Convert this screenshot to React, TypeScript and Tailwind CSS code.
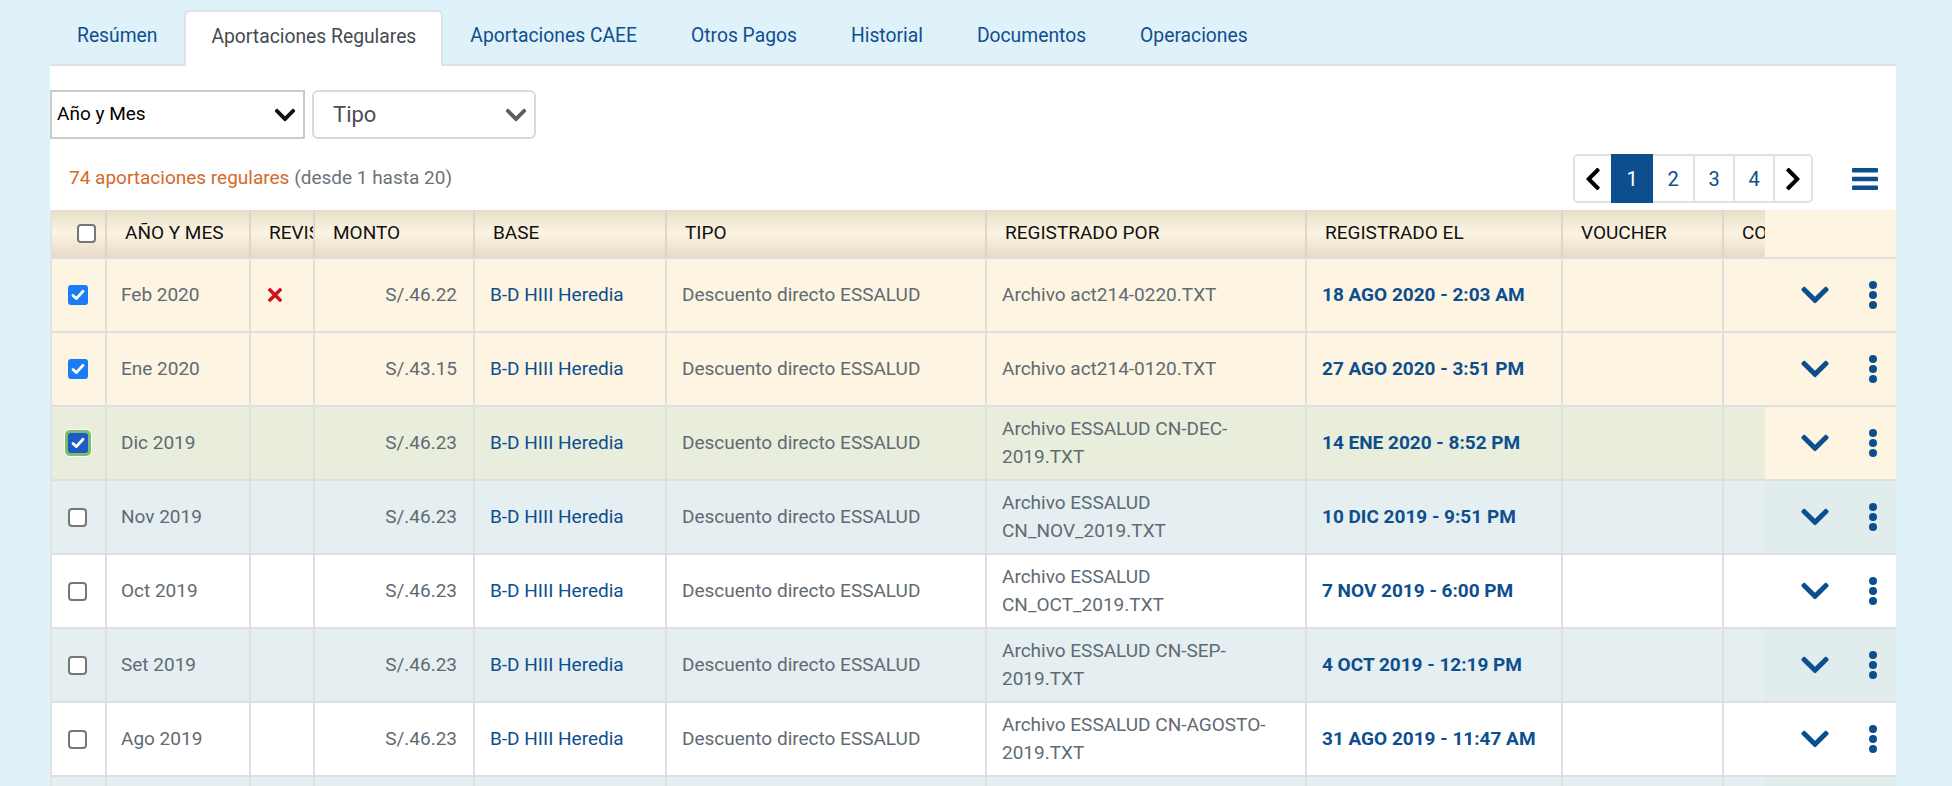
import { FaChevronDown, FaChevronLeft, FaChevronRight } from 'react-icons/fa';

type Tone = 'cream' | 'green' | 'stripe' | 'white';
type CheckState = 'off' | 'on' | 'focus';

interface Aporte {
  mes: string;
  revis?: boolean;
  monto: string;
  archivo: string;
  fecha: string;
  check: CheckState;
  tone: Tone;
}

const COLS =
  'grid grid-cols-[53px_144px_64px_160px_192px_320px_320px_256px_161px_43px_131px]';

const ROW_BG: Record<Tone, string> = {
  cream: 'bg-[#fdf4e1]',
  green: 'bg-[#e8eedb]',
  stripe: 'bg-[#e5eef0]',
  white: 'bg-white',
};

const STICKY_BG: Record<Tone, string> = {
  cream: 'bg-[#fdf4e1]',
  green: 'bg-[#fdf4e1]',
  stripe: 'bg-[#e1ecec]',
  white: 'bg-white',
};

const aportes: Aporte[] = [
  { mes: 'Feb 2020', revis: true, monto: 'S/.46.22', archivo: 'Archivo act214-0220.TXT', fecha: '18 AGO 2020 - 2:03 AM', check: 'on', tone: 'cream' },
  { mes: 'Ene 2020', monto: 'S/.43.15', archivo: 'Archivo act214-0120.TXT', fecha: '27 AGO 2020 - 3:51 PM', check: 'on', tone: 'cream' },
  { mes: 'Dic 2019', monto: 'S/.46.23', archivo: 'Archivo ESSALUD CN-DEC-2019.TXT', fecha: '14 ENE 2020 - 8:52 PM', check: 'focus', tone: 'green' },
  { mes: 'Nov 2019', monto: 'S/.46.23', archivo: 'Archivo ESSALUD CN_NOV_2019.TXT', fecha: '10 DIC 2019 - 9:51 PM', check: 'off', tone: 'stripe' },
  { mes: 'Oct 2019', monto: 'S/.46.23', archivo: 'Archivo ESSALUD CN_OCT_2019.TXT', fecha: '7 NOV 2019 - 6:00 PM', check: 'off', tone: 'white' },
  { mes: 'Set 2019', monto: 'S/.46.23', archivo: 'Archivo ESSALUD CN-SEP-2019.TXT', fecha: '4 OCT 2019 - 12:19 PM', check: 'off', tone: 'stripe' },
  { mes: 'Ago 2019', monto: 'S/.46.23', archivo: 'Archivo ESSALUD CN-AGOSTO-2019.TXT', fecha: '31 AGO 2019 - 11:47 AM', check: 'off', tone: 'white' },
  { mes: 'Jul 2019', monto: 'S/.46.23', archivo: 'Archivo ESSALUD CN-JUL-2019.TXT', fecha: '2 AGO 2019 - 10:12 AM', check: 'off', tone: 'stripe' },
];

const tabs = ['Resúmen', 'Aportaciones Regulares', 'Aportaciones CAEE', 'Otros Pagos', 'Historial', 'Documentos', 'Operaciones'];

function Checkbox({ state }: { state: CheckState }) {
  if (state === 'off') {
    return <span className="block h-[19px] w-[19px] rounded-[4px] border-2 border-[#767676] bg-white" />;
  }
  const box = (
    <span
      className={`grid h-[20px] w-[20px] place-items-center rounded-[3px] ${state === 'focus' ? 'bg-[#1d5bc3]' : 'bg-[#1b7cf5]'}`}
    >
      <svg width="14" height="12" viewBox="0 0 14 12" fill="none">
        <path d="M2 6.5 L5.3 9.6 L12 2.2" stroke="white" strokeWidth="2.8" strokeLinecap="round" strokeLinejoin="round" />
      </svg>
    </span>
  );
  if (state === 'focus') {
    return <span className="-ml-[4px] block rounded-[6px] border border-white bg-[#7dbb70] p-[3px]">{box}</span>;
  }
  return box;
}

function XMark() {
  return (
    <svg width="14" height="14" viewBox="0 0 14 14">
      <path d="M2 2 L12 12 M12 2 L2 12" stroke="#d0101e" strokeWidth="3.4" strokeLinecap="square" />
    </svg>
  );
}

function Kebab() {
  return (
    <svg width="8" height="28" viewBox="0 0 8 28" fill="#0c4e8e">
      <circle cx="4" cy="4" r="4" />
      <circle cx="4" cy="14" r="4" />
      <circle cx="4" cy="24" r="4" />
    </svg>
  );
}

function HeaderRow() {
  const cell =
    'flex items-center overflow-hidden whitespace-nowrap border-l-2 border-[#dcd6cb] bg-linear-to-b from-[#e7dec9] via-[#fcf3e2] to-[#e6dbc6] pl-[18px]';
  return (
    <div className={`${COLS} h-[47px] text-[19px] text-[#111]`}>
      <div className="flex items-center bg-linear-to-b from-[#e7dec9] via-[#fcf3e2] to-[#e6dbc6] pl-[25px]">
        <Checkbox state="off" />
      </div>
      <div className={cell}>AÑO Y MES</div>
      <div className={cell}>REVISADO</div>
      <div className={cell}>MONTO</div>
      <div className={cell}>BASE</div>
      <div className={cell}>TIPO</div>
      <div className={cell}>REGISTRADO POR</div>
      <div className={cell}>REGISTRADO EL</div>
      <div className={cell}>VOUCHER</div>
      <div className={cell}>COMENTARIO</div>
      <div className="bg-[#fdf4e1]" />
    </div>
  );
}

function AporteRow({ a }: { a: Aporte }) {
  const cell = 'flex items-center border-l-2 border-[#dedfe0]';
  return (
    <div className={`${COLS} h-[74px] border-t-2 border-[#dedfe0] ${ROW_BG[a.tone]} text-[19px] text-[#5f6b73]`}>
      <div className="flex items-center pl-[16px]">
        <Checkbox state={a.check} />
      </div>
      <div className={`${cell} pl-[14px]`}>{a.mes}</div>
      <div className={`${cell} pl-[17px]`}>{a.revis && <XMark />}</div>
      <div className={`${cell} justify-end pr-[16px]`}>{a.monto}</div>
      <div className={`${cell} pl-[15px] text-[#0c4e8e]`}>B-D HIII Heredia</div>
      <div className={`${cell} pl-[15px]`}>Descuento directo ESSALUD</div>
      <div className={`${cell} pl-[15px] pr-[16px] leading-[28px]`}>{a.archivo}</div>
      <div className={`${cell} pl-[15px] font-bold text-[#0c4e8e]`}>{a.fecha}</div>
      <div className={cell} />
      <div className={cell} />
      <div className={`flex items-center pl-[34px] ${STICKY_BG[a.tone]}`}>
        <FaChevronDown size={32} color="#0c4e8e" />
        <span className="ml-[38px]">
          <Kebab />
        </span>
      </div>
    </div>
  );
}

export default function App() {
  return (
    <div className="h-screen overflow-hidden bg-[#dff2f9] pt-[10px] font-['Roboto',sans-serif]">
      <div className="ml-[50px] mr-[56px]">
        <nav className="flex h-[54px] items-stretch">
          {tabs.map((t, i) =>
            i === 1 ? (
              <div
                key={t}
                className="relative z-10 -mb-[2px] flex h-[56px] items-center rounded-t-[6px] border-2 border-b-0 border-[#dee2e6] bg-white px-[25px] pb-[4px] text-[19.3px] text-[#454a50]"
              >
                {t}
              </div>
            ) : (
              <div key={t} className="flex items-center px-[27px] pb-[2px] text-[19.3px] text-[#114e8f]">
                {t}
              </div>
            ),
          )}
        </nav>

        <section className="h-[800px] border-t-2 border-[#dee2e6] bg-white">
          <div className="mt-[24px] flex gap-[7px]">
            <div className="flex h-[49px] w-[255px] items-center justify-between border-2 border-[#cbcbcb] bg-white pl-[5px] pr-[6px] text-[19px] text-black">
              <span>Año y Mes</span>
              <FaChevronDown size={24} color="#111" />
            </div>
            <div className="flex h-[49px] w-[224px] items-center justify-between rounded-[6px] border-2 border-[#dadada] bg-white pl-[19px] pr-[6px] text-[22px] text-[#494f55]">
              <span>Tipo</span>
              <FaChevronDown size={24} color="#5a5f64" />
            </div>
          </div>

          <div className="mb-[7px] mt-[15px] flex h-[49px] items-center justify-between pl-[19px] pr-[18px]">
            <p className="text-[19px] text-[#d4692a]">
              74 aportaciones regulares <span className="text-[#6b737a]">(desde 1 hasta 20)</span>
            </p>
            <div className="flex items-center">
              <div className="flex h-[49px] rounded-[5px] border-2 border-[#dee2e6] text-[20px] text-[#0c4e8e]">
                <button className="grid w-[36px] place-items-center">
                  <FaChevronLeft size={26} color="#000" />
                </button>
                <button className="-my-[2px] grid w-[42px] place-items-center bg-[#0c4e8e] text-white">1</button>
                <button className="grid w-[40px] place-items-center">2</button>
                <button className="grid w-[40px] place-items-center border-l-2 border-[#dee2e6]">3</button>
                <button className="grid w-[40px] place-items-center border-l-2 border-[#dee2e6]">4</button>
                <button className="grid w-[38px] place-items-center border-l-2 border-[#dee2e6]">
                  <FaChevronRight size={26} color="#000" />
                </button>
              </div>
              <svg className="ml-[39px]" width="26" height="22" viewBox="0 0 26 22" fill="#0c4e8e">
                <rect x="0" y="0" width="26" height="4.6" rx="1" />
                <rect x="0" y="8.7" width="26" height="4.6" rx="1" />
                <rect x="0" y="17.4" width="26" height="4.6" rx="1" />
              </svg>
            </div>
          </div>

          <div className="border-l-2 border-[#e3e3e3]">
            <HeaderRow />
            {aportes.map((a) => (
              <AporteRow key={a.mes} a={a} />
            ))}
          </div>
        </section>
      </div>
    </div>
  );
}
